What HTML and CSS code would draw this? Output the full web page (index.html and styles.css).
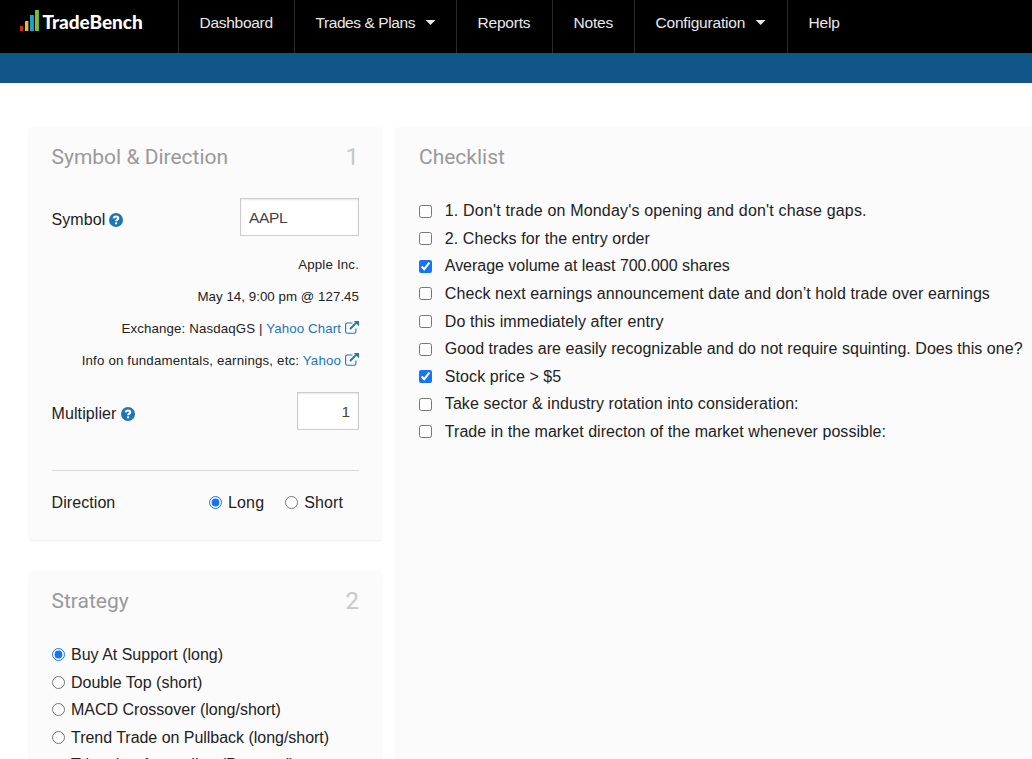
FILE: index.html
```html
<!DOCTYPE html>
<html lang="en">
<head>
<meta charset="utf-8">
<title>TradeBench</title>
<link rel="stylesheet" href="styles.css">
</head>
<body>
<header class="topbar">
  <a class="brand"><svg class="brand-bars" width="19" height="22" viewBox="0 0 19 22"><path fill="#c52f14" d="M0 16h3.4v5H0z"/><path fill="#f0b52c" d="M5 11h3.4v10H5z"/><path fill="#18a4ce" d="M10 5h3.9v16H10z"/><path fill="#7cc030" d="M15 0h3.9v21H15z"/></svg><span class="brand-name">TradeBench</span></a>
  <nav class="nav">
    <a class="nav-item dashboard">Dashboard</a>
    <a class="nav-item trades">Trades &amp; Plans<i class="caret"></i></a>
    <a class="nav-item reports">Reports</a>
    <a class="nav-item notes">Notes</a>
    <a class="nav-item config">Configuration<i class="caret"></i></a>
    <a class="nav-item">Help</a>
  </nav>
</header>
<div class="strip"></div>
<main class="page">
  <div class="column">
    <section class="card symbol-card">
      <div class="card-head"><h2>Symbol &amp; Direction</h2><span class="step">1</span></div>
      <div class="field symbol-field"><span class="label">Symbol</span><svg class="help" viewBox="0 0 14 14"><circle cx="7" cy="7" r="7" fill="#1c75b5"/><path d="M4.700 5.300C4.900 3.900 5.900 3.400 7 3.400c1.300 0 2.300.8 2.300 1.800C9.300 6.600 7.100 6.600 7.100 8.300" fill="none" stroke="#fff" stroke-width="2"/><path fill="#fff" d="M6.100 9.300H8.100v2H6.100z"/></svg><input class="box symbol-box" value="AAPL"></div>
      <div class="facts">
        <div class="fact wide">Apple Inc.</div>
        <div class="fact">May 14, 9:00 pm @ 127.45</div>
        <div class="fact exchange">Exchange: NasdaqGS | <a>Yahoo Chart <svg class="ext" viewBox="0 0 14 13"><path d="M7.500 2H2.500Q.6 2 .6 3.900v6.500q0 1.900 1.900 1.900H9q1.900 0 1.900-1.900V7.500" fill="none" stroke="currentColor" stroke-width="1.100"/><path d="M5 8l6-6" stroke="currentColor" stroke-width="1.800"/><path d="M8.800 0H14v5.200z" fill="currentColor"/></svg></a></div>
        <div class="fact wide">Info on fundamentals, earnings, etc: <a>Yahoo <svg class="ext" viewBox="0 0 14 13"><path d="M7.500 2H2.500Q.6 2 .6 3.900v6.500q0 1.900 1.900 1.900H9q1.900 0 1.900-1.900V7.500" fill="none" stroke="currentColor" stroke-width="1.100"/><path d="M5 8l6-6" stroke="currentColor" stroke-width="1.800"/><path d="M8.800 0H14v5.200z" fill="currentColor"/></svg></a></div>
      </div>
      <div class="field multiplier-field"><span class="label">Multiplier</span><svg class="help" viewBox="0 0 14 14"><circle cx="7" cy="7" r="7" fill="#1c75b5"/><path d="M4.700 5.300C4.900 3.900 5.900 3.400 7 3.400c1.300 0 2.300.8 2.300 1.800C9.300 6.600 7.100 6.600 7.100 8.300" fill="none" stroke="#fff" stroke-width="2"/><path fill="#fff" d="M6.100 9.300H8.100v2H6.100z"/></svg><input class="box multiplier-box" value="1"></div>
      <div class="direction"><span class="direction-label">Direction</span>
        <label class="option long"><input type="radio" name="direction" checked><span>Long</span></label>
        <label class="option"><input type="radio" name="direction"><span>Short</span></label>
      </div>
    </section>
    <section class="card strategy-card">
      <div class="card-head"><h2>Strategy</h2><span class="step">2</span></div>
      <div class="strategies">
        <label class="option"><input type="radio" name="strategy" checked><span>Buy At Support (long)</span></label>
        <label class="option"><input type="radio" name="strategy"><span>Double Top (short)</span></label>
        <label class="option"><input type="radio" name="strategy"><span>MACD Crossover (long/short)</span></label>
        <label class="option"><input type="radio" name="strategy"><span class="tight">Trend Trade on Pullback (long/short)</span></label>
        <label class="option"><input type="radio" name="strategy"><span>Triangle - Ascending (Personal)</span></label>
      </div>
    </section>
  </div>
  <section class="card checklist">
    <div class="card-head"><h2>Checklist</h2></div>
    <div class="checks">
      <label class="option looser"><input type="checkbox"><span>1. Don't trade on Monday's opening and don't chase gaps.</span></label>
      <label class="option loose"><input type="checkbox"><span>2. Checks for the entry order</span></label>
      <label class="option tight"><input type="checkbox" checked><span>Average volume at least 700.000 shares</span></label>
      <label class="option loose"><input type="checkbox"><span>Check next earnings announcement date and don’t hold trade over earnings</span></label>
      <label class="option loose"><input type="checkbox"><span>Do this immediately after entry</span></label>
      <label class="option slight"><input type="checkbox"><span>Good trades are easily recognizable and do not require squinting. Does this one?</span></label>
      <label class="option loose"><input type="checkbox" checked><span>Stock price &gt; $5</span></label>
      <label class="option loose"><input type="checkbox"><span>Take sector &amp; industry rotation into consideration:</span></label>
      <label class="option slight"><input type="checkbox"><span>Trade in the market directon of the market whenever possible:</span></label>
    </div>
  </section>
</main>
</body>
</html>
```
FILE: styles.css
```css
* { box-sizing: border-box; }
body { margin: 0; height: 759px; overflow: hidden; background: #fff; color: #222; font: 16px/27.600px "Liberation Sans", Arial, sans-serif; }
.topbar { display: flex; height: 53px; background: #000; }
.brand { display: flex; width: 178px; padding: 10px 0 0 20px; }
.brand-bars { flex: none; margin-right: 3.500px; }
.brand-name { color: #fff; font: 900 19px/24px Lato, sans-serif; letter-spacing: -.05px; }
.nav { display: flex; }
.nav-item { display: flex; height: 53px; padding-left: 20.500px; border-left: 1px solid #292929; color: #e9e9e9; font-size: 15.500px; letter-spacing: -.2px; line-height: 45px; white-space: nowrap; }
.dashboard { width: 116px; letter-spacing: -.28px; }
.trades { width: 162px; letter-spacing: -.42px; }
.reports { width: 96px; }
.notes { width: 82px; }
.config { width: 153px; }
.caret { margin: 20px 0 0 10.500px; width: 10px; height: 5px; background: #e9e9e9; clip-path: polygon(0 0, 100% 0, 50% 100%); }
.strip { height: 30px; background: #105689; }
.page { display: flex; gap: 14px; height: 676px; overflow: hidden; padding: 44px 0 0 29px; }
.column { display: flex; flex: none; flex-direction: column; gap: 31px; width: 353px; }
.card { padding: 0 23px 0 22.500px; border-radius: 4px; background: #fbfbfb; box-shadow: 0 1px 2px #e9edf3; }
.symbol-card { flex: none; height: 413px; }
.strategy-card { flex: none; height: 420px; }
.checklist { flex: none; width: 680px; height: 700px; padding-left: 23px; }
.card-head { display: flex; justify-content: space-between; height: 60px; }
h2 { margin: 0; color: #999; font: 400 21px/60px Roboto, sans-serif; }
.step { color: #c8c8c8; font: 400 24px/60px Roboto, sans-serif; }
.field { display: flex; align-items: center; height: 38px; }
.symbol-field { margin-top: 11px; }
.multiplier-field { margin-top: 15px; }
.label { padding-top: 5px; letter-spacing: .1px; }
.help { width: 14px; height: 14px; margin: 5px 0 0 4px; }
.box { height: 38px; margin-left: auto; padding: 2px 8px 0; border: 1px solid #ccc; background: #fff; box-shadow: inset 0 1px 2px rgba(0,0,0,.1); color: #444; font: 15.500px "Liberation Sans", Arial, sans-serif; }
.symbol-box { width: 119px; letter-spacing: -.3px; }
.multiplier-box { width: 62px; text-align: right; }
.facts { margin-top: 13px; }
.fact { height: 32px; font-size: 13.300px; letter-spacing: .04px; line-height: 32px; text-align: right; white-space: nowrap; }
.exchange { letter-spacing: .12px; }
.wide { letter-spacing: .17px; }
.fact a { color: #1c75b5; }
.ext { width: 14px; height: 13px; vertical-align: -1px; }
.direction { display: flex; align-items: center; margin-top: 40px; height: 64px; border-top: 1px solid #d9d9d9; }
.direction-label { width: 157px; letter-spacing: .08px; }
.option { display: flex; align-items: center; height: 27.600px; white-space: nowrap; }
.option input { flex: none; width: 13px; height: 13px; margin: 0 6.500px 0 0; accent-color: #1674f8; }
.direction .option { letter-spacing: .15px; }
.long { margin-right: 20.500px; }
.slight { letter-spacing: .04px; }
.loose { letter-spacing: .085px; }
.looser { letter-spacing: .175px; }
.tight { letter-spacing: -.03px; }
.strategies { padding-top: 10px; }
.checks { padding-top: 10.300px; }
.checks .option input { margin-right: 12.800px; }
```
